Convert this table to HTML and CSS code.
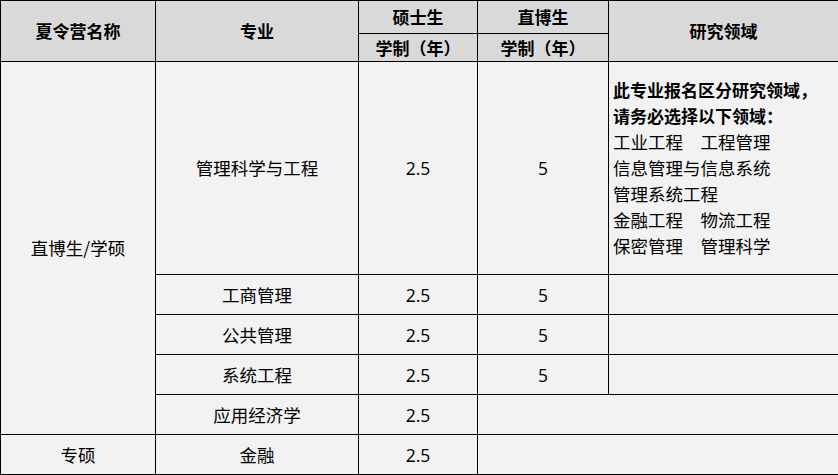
FILE: index.html
```html
<!DOCTYPE html>
<html lang="zh-CN">
<head>
<meta charset="utf-8">
<title>夏令营</title>
<link rel="stylesheet" href="styles.css">
</head>
<body>
<table class="grid">
  <colgroup>
    <col class="c1"><col class="c2"><col class="c3"><col class="c4"><col class="c5">
  </colgroup>
  <thead>
    <tr class="h1">
      <th rowspan="2">夏令营名称</th>
      <th rowspan="2">专业</th>
      <th>硕士生</th>
      <th>直博生</th>
      <th rowspan="2">研究领域</th>
    </tr>
    <tr class="h2">
      <th>学制（年）</th>
      <th>学制（年）</th>
    </tr>
  </thead>
  <tbody>
    <tr class="big">
      <td rowspan="5">直博生/学硕</td>
      <td>管理科学与工程</td>
      <td class="num">2.5</td>
      <td class="num">5</td>
      <td class="area">
        <div class="note">此专业报名区分研究领域，</div>
        <div class="note">请务必选择以下领域：</div>
        <div>工业工程　工程管理</div>
        <div>信息管理与信息系统</div>
        <div>管理系统工程</div>
        <div>金融工程　物流工程</div>
        <div>保密管理　管理科学</div>
      </td>
    </tr>
    <tr class="row">
      <td>工商管理</td>
      <td class="num">2.5</td>
      <td class="num">5</td>
      <td></td>
    </tr>
    <tr class="row">
      <td>公共管理</td>
      <td class="num">2.5</td>
      <td class="num">5</td>
      <td></td>
    </tr>
    <tr class="row">
      <td>系统工程</td>
      <td class="num">2.5</td>
      <td class="num">5</td>
      <td></td>
    </tr>
    <tr class="row">
      <td>应用经济学</td>
      <td class="num">2.5</td>
      <td colspan="2"></td>
    </tr>
    <tr class="row">
      <td>专硕</td>
      <td>金融</td>
      <td class="num">2.5</td>
      <td colspan="2"></td>
    </tr>
  </tbody>
</table>
</body>
</html>
```

FILE: styles.css
```css
html, body {
  margin: 0;
  padding: 0;
  background: #f2f2f2;
}

.grid {
  border-collapse: collapse;
  table-layout: fixed;
  width: 838px;
  font-family: "Noto Sans CJK SC", "Noto Sans", sans-serif;
  font-size: 17.5px;
  color: #000;
  background: #f2f2f2;
}

.c1 { width: 155px; }
.c2 { width: 203px; }
.c3 { width: 119px; }
.c4 { width: 131px; }
.c5 { width: 230px; }

.grid th,
.grid td {
  border: 1px solid #000;
  padding: 0;
  text-align: center;
  vertical-align: middle;
  line-height: 24px;
}

.grid th {
  background: #d9d9d9;
  font-weight: bold;
  font-size: 17px;
}

.h1 { height: 33px; }
.h2 { height: 28px; }
.big { height: 213px; }
.row { height: 40px; }

.num {
  font-family: "Open Sans", "Noto Sans", sans-serif;
  font-size: 17.5px;
}

.grid td.area {
  text-align: left;
  padding-left: 4px;
  line-height: 26px;
  white-space: nowrap;
}

.note {
  font-weight: bold;
  font-size: 17px;
}
```
